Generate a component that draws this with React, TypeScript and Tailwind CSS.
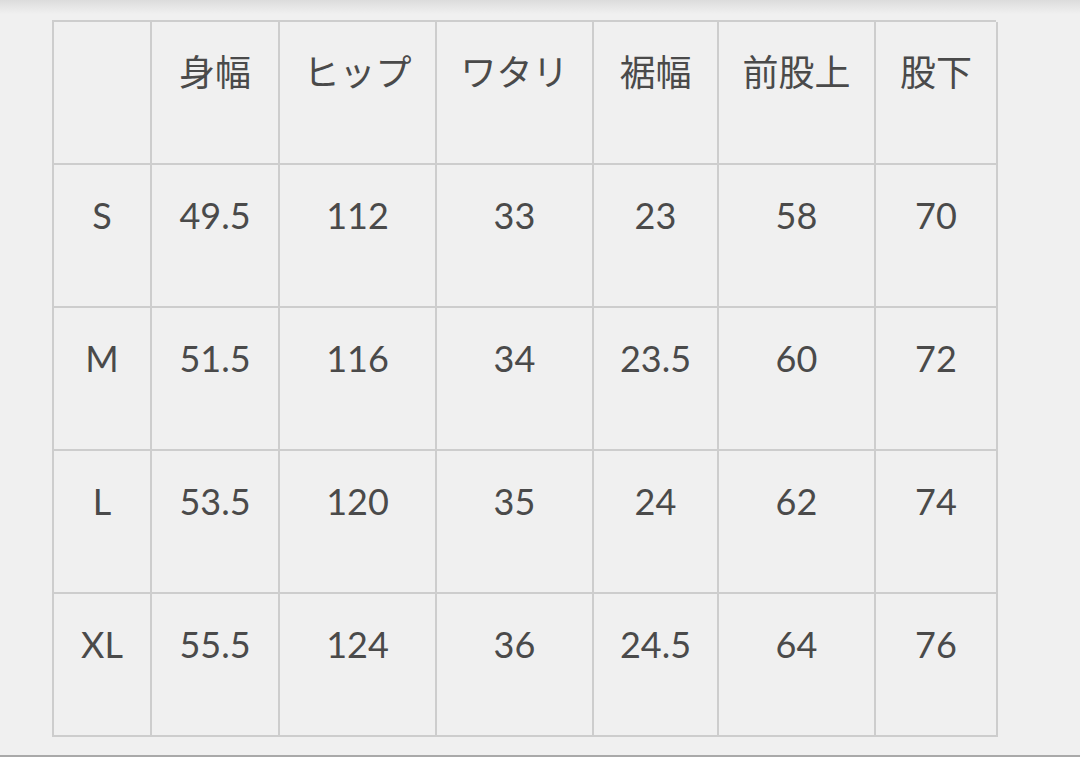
const headers = ["", "身幅", "ヒップ", "ワタリ", "裾幅", "前股上", "股下"];

const rows: string[][] = [
  ["S", "49.5", "112", "33", "23", "58", "70"],
  ["M", "51.5", "116", "34", "23.5", "60", "72"],
  ["L", "53.5", "120", "35", "24", "62", "74"],
  ["XL", "55.5", "124", "36", "24.5", "64", "76"],
];

function Cell({ text }: { text: string }) {
  return (
    <div className="flex h-[143px] justify-center border-b-2 border-r-2 border-[#cdcdcd] pt-[30px] text-[36px] leading-[40px] text-[#4a4a4a]">
      {text}
    </div>
  );
}

export default function App() {
  return (
    <div
      className="flex h-[757px] w-[1080px] flex-col bg-[#f0f0f0]"
      style={{ fontFamily: "Lato, 'Noto Sans CJK JP', sans-serif" }}
    >
      {/* top shadow */}
      <div className="h-[14px] bg-gradient-to-b from-[#dcdcdc] to-[#f0f0f0]" />

      <div className="ml-[52px] mt-[6px] grid w-[944px] grid-cols-[98px_128px_157px_157px_125px_157px_122px] border-l-2 border-t-2 border-[#cdcdcd]">
        {headers.map((h, i) => (
          <Cell key={"h" + i} text={h} />
        ))}
        {rows.map((r, ri) =>
          r.map((v, ci) => <Cell key={ri + "-" + ci} text={v} />)
        )}
      </div>

      <div className="flex-1" />
      <div className="h-[2px] bg-[#a9a9a9]" />
    </div>
  );
}
